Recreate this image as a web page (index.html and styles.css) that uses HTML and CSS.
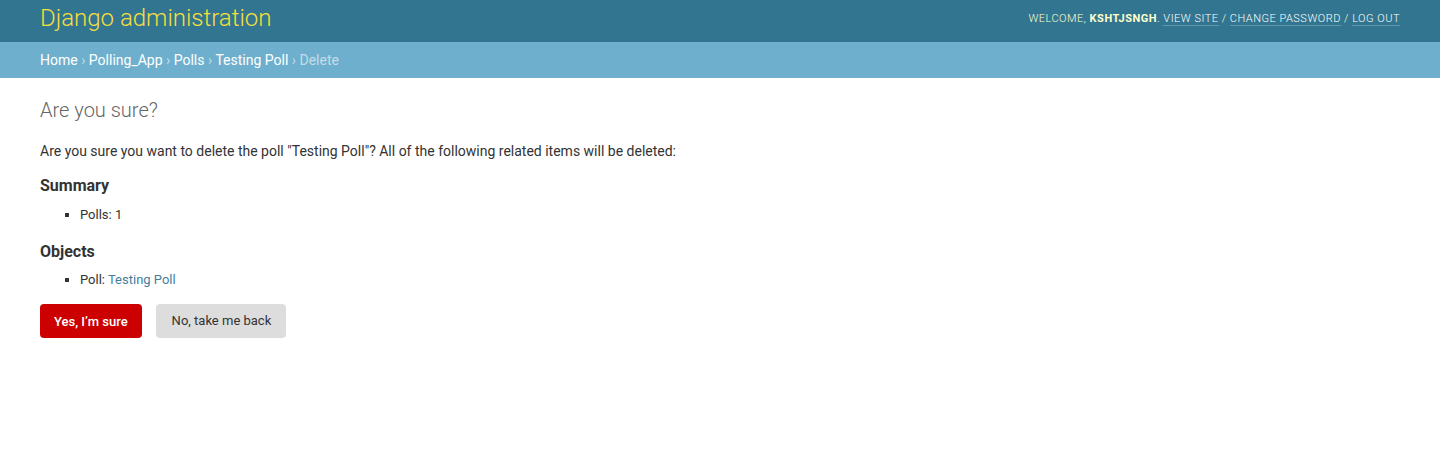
FILE: index.html
```html
<!DOCTYPE html>
<html lang="en">
<head>
<meta charset="utf-8">
<title>Are you sure? | Django site admin</title>
<link rel="stylesheet" href="styles.css">
</head>
<body class="delete-confirmation">
<div id="container">
  <div id="header" class="header">
    <div class="branding">
      <h1 class="site-name"><a href="#">Django administration</a></h1>
    </div>
    <div class="user-tools">
      Welcome, <strong>kshtjsngh</strong>.
      <a href="#">View site</a> /
      <a href="#">Change password</a> /
      <a href="#">Log out</a>
    </div>
  </div>
  <div class="breadcrumbs">
    <a href="#">Home</a> ›
    <a href="#">Polling_App</a> ›
    <a href="#">Polls</a> ›
    <a href="#">Testing Poll</a> ›
    Delete
  </div>
  <div class="content">
    <h1 class="page-title">Are you sure?</h1>
    <p class="intro">Are you sure you want to delete the poll "Testing Poll"? All of the following related items will be deleted:</p>
    <h2 class="section-title">Summary</h2>
    <ul class="item-list">
      <li>Polls: 1</li>
    </ul>
    <h2 class="section-title">Objects</h2>
    <ul class="item-list objects">
      <li>Poll: <a href="#">Testing Poll</a></li>
    </ul>
    <form class="actions">
      <button type="button" class="btn-delete">Yes, I’m sure</button>
      <a href="#" class="cancel-link">No, take me back</a>
    </form>
  </div>
</div>
</body>
</html>
```

FILE: styles.css
```css
html, body {
  margin: 0;
  padding: 0;
  height: 100%;
}
body {
  font-family: Roboto, "Lucida Grande", "DejaVu Sans", sans-serif;
  font-size: 14px;
  color: #333;
  background: #fff;
}
a {
  text-decoration: none;
}
.header {
  display: flex;
  justify-content: space-between;
  align-items: center;
  height: 42px;
  box-sizing: border-box;
  padding: 0 40px 6px;
  background: #327590;
  color: #ffc;
}
.site-name {
  margin: 0;
  font-size: 24px;
  font-weight: 300;
  line-height: 28px;
}
.site-name a {
  color: #f5df3c;
}
.user-tools {
  font-size: 11px;
  font-weight: 300;
  letter-spacing: 0.5px;
  text-transform: uppercase;
  line-height: 16px;
  padding-top: 2px;
}
.user-tools strong {
  font-weight: 700;
  color: #ffc;
}
.user-tools a {
  color: #fff;
  border-bottom: 1px solid rgba(255, 255, 255, 0.25);
}
.breadcrumbs {
  background: #6eafcd;
  height: 36px;
  box-sizing: border-box;
  padding: 9px 40px;
  font-size: 14px;
  line-height: 18px;
  color: #c4dce8;
}
.breadcrumbs a {
  color: #fff;
}
.content {
  padding: 20px 40px;
}
.page-title {
  margin: 0 0 20px;
  font-size: 20px;
  font-weight: 300;
  line-height: 24px;
  color: #666;
}
.intro {
  margin: 3px 0 9px;
  font-size: 14px;
  line-height: 18px;
}
.section-title {
  margin: 16px 0 8px;
  font-size: 16px;
  font-weight: 700;
  line-height: 20px;
}
.item-list {
  margin: 0 0 10px;
  padding-left: 40px;
}
.item-list li {
  list-style-type: square;
  font-size: 13px;
  line-height: 20px;
  padding: 1px 0;
}
.item-list.objects li {
  padding: 0 0 2px;
}
.item-list a {
  color: #447e9b;
}
.actions {
  display: flex;
  align-items: center;
  gap: 14px;
  margin-top: 12px;
}
.btn-delete {
  background: #cc0000;
  color: #fff;
  border: none;
  border-radius: 4px;
  padding: 0 14px;
  height: 34px;
  font-family: inherit;
  font-size: 13px;
  font-weight: 500;
  cursor: pointer;
}
.cancel-link {
  display: inline-block;
  background: #ddd;
  color: #333;
  border-radius: 4px;
  padding: 0 15px 0 16px;
  height: 34px;
  line-height: 34px;
  font-size: 13px;
}
```
